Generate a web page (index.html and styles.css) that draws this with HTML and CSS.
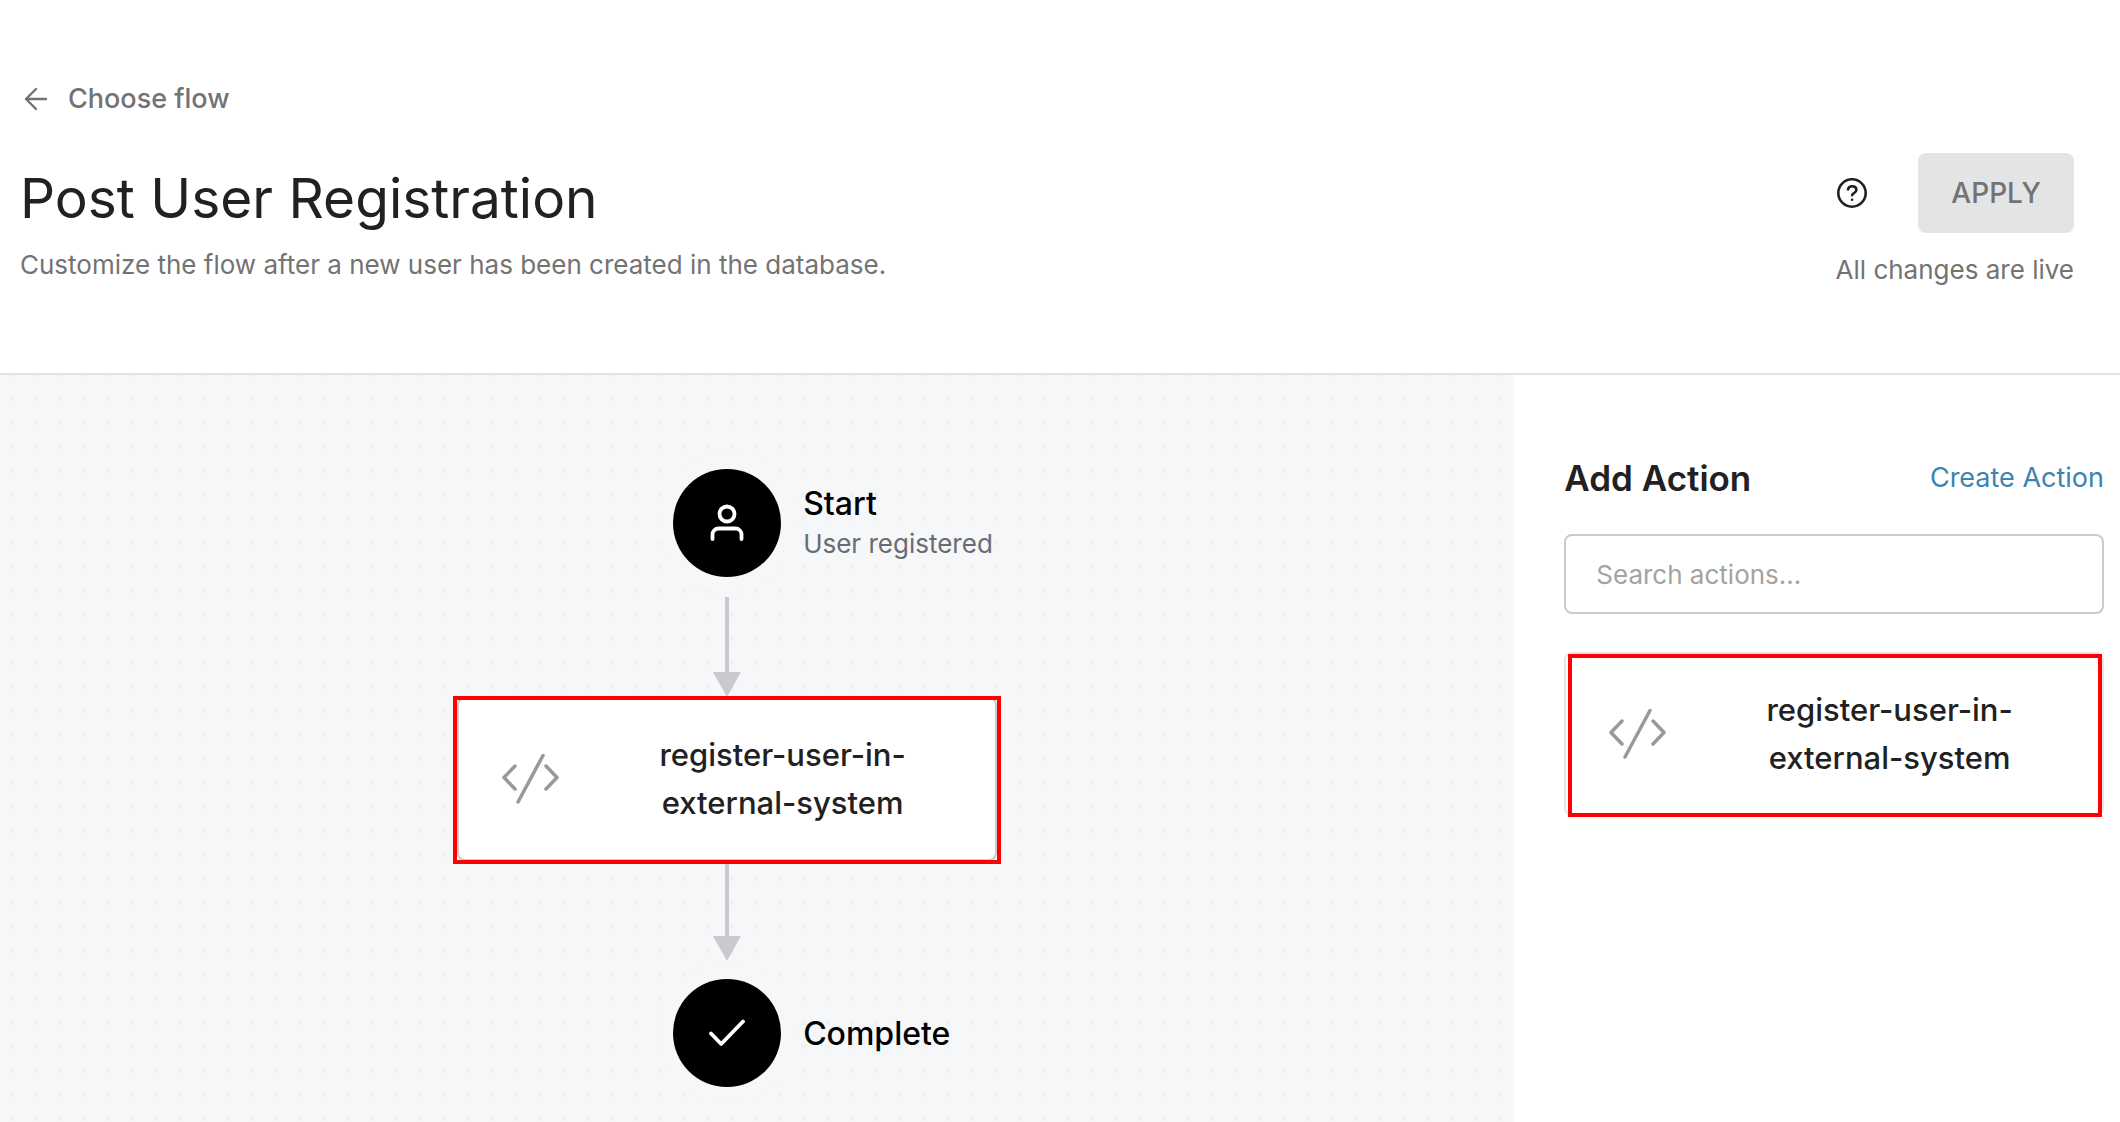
FILE: index.html
```html
<!DOCTYPE html>
<html lang="en">
<head>
<meta charset="utf-8">
<meta name="viewport" content="width=device-width, initial-scale=1">
<title>Post User Registration</title>
<link rel="stylesheet" href="styles.css">
</head>
<body>
<header class="page-header">
  <a class="back-link" href="#">
    <svg width="24" height="24" viewBox="0 0 24 24" fill="none" stroke="currentColor" stroke-width="2.4" stroke-linecap="round" stroke-linejoin="round" aria-hidden="true"><path d="M22 12H2M12 2L2 12l10 10"/></svg>
    Choose flow
  </a>
  <div class="header-row">
    <div class="intro">
      <h1 class="title">Post User Registration</h1>
      <p class="subtitle">Customize the flow after a new user has been created in the database.</p>
    </div>
    <div class="publish">
      <div class="publish-actions">
        <button class="help-button" type="button" aria-label="Help">
          <svg width="32" height="32" viewBox="0 0 32 32" fill="none" stroke="currentColor" stroke-width="2.6" stroke-linecap="round" stroke-linejoin="round" aria-hidden="true"><circle cx="16" cy="16" r="13.7"/><path d="M12 12.400c.5-2 2.100-3.100 4.100-3.100 2.500 0 4.300 1.500 4.300 3.800 0 2.900-4.300 3.100-4.300 5.200"/><path d="M16.100 22.700v.1"/></svg>
        </button>
        <button class="apply-button" type="button" disabled>APPLY</button>
      </div>
      <p class="status">All changes are live</p>
    </div>
  </div>
</header>
<main class="workspace">
  <section class="canvas" aria-label="Flow">
    <div class="node">
      <span class="node-circle">
        <svg width="36" height="40" viewBox="0 0 36 40" fill="none" stroke="currentColor" stroke-width="3.800" stroke-linecap="round" aria-hidden="true"><circle cx="18" cy="11" r="7.500"/><path d="M3.500 36v-4.500a6 6 0 0 1 6-6h17a6 6 0 0 1 6 6V36"/></svg>
      </span>
      <div class="node-label">
        <strong class="node-name">Start</strong>
        <span class="node-detail">User registered</span>
      </div>
    </div>
    <svg class="arrow arrow-start" width="28" height="100" viewBox="0 0 28 100" aria-hidden="true"><path d="M12 0h4v75h12L14 100 0 75h12z"/></svg>
    <article class="action-card placed">
      <svg class="code-icon" width="57" height="50" viewBox="0 0 57 50" aria-hidden="true"><path d="M13 12L2 23.500 13 35M44 12l11 11.500L44 35M41 1.500L16 48"/></svg>
      <span class="action-name">register-user-in-external-system</span>
    </article>
    <svg class="arrow arrow-end" width="28" height="100" viewBox="0 0 28 100" aria-hidden="true"><path d="M12 0h4v75h12L14 100 0 75h12z"/></svg>
    <div class="node">
      <span class="node-circle">
        <svg width="36" height="28" viewBox="0 0 36 28" fill="none" stroke="currentColor" stroke-width="3.800" stroke-linecap="round" stroke-linejoin="round" aria-hidden="true"><path d="M2 14.500L12.200 25 34 2.500"/></svg>
      </span>
      <div class="node-label">
        <strong class="node-name">Complete</strong>
      </div>
    </div>
  </section>
  <aside class="panel">
    <div class="panel-head">
      <h2 class="panel-title">Add Action</h2>
      <a class="create-link" href="#">Create Action</a>
    </div>
    <input class="search" type="search" placeholder="Search actions..." aria-label="Search actions">
    <article class="action-card available">
      <svg class="code-icon" width="57" height="50" viewBox="0 0 57 50" aria-hidden="true"><path d="M13 12L2 23.500 13 35M44 12l11 11.500L44 35M41 1.500L16 48"/></svg>
      <span class="action-name">register-user-in-external-system</span>
    </article>
  </aside>
</main>
</body>
</html>
```
FILE: styles.css
```css
* {
  box-sizing: border-box;
}

body {
  margin: 0;
  min-height: 100vh;
  display: flex;
  flex-direction: column;
  background: #fff;
  color: #212121;
  font-family: Inter, "Liberation Sans", sans-serif;
  font-size: 26px;
  line-height: 40px;
}

h1, h2, p {
  margin: 0;
}

/* Header */
.page-header {
  padding: 81px 46px 83px 20px;
  border-bottom: 2px solid #e2e3e4;
}

.back-link {
  display: flex;
  align-items: center;
  gap: 20px;
  width: fit-content;
  margin-left: 4px;
  color: #737373;
  font-size: 27px;
  font-weight: 500;
  line-height: 36px;
  text-decoration: none;
}

.header-row {
  display: flex;
  justify-content: space-between;
  margin-top: 36px;
}

.intro {
  padding-top: 13px;
}

.title {
  font-size: 55px;
  font-weight: 400;
  line-height: 64px;
}

.subtitle {
  margin-top: 15px;
  color: #737373;
}

.publish {
  display: flex;
  flex-direction: column;
  align-items: flex-end;
  gap: 17px;
}

.publish-actions {
  display: flex;
  align-items: center;
  gap: 50px;
}

.help-button {
  display: flex;
  padding: 0;
  border: 0;
  background: none;
  color: #212121;
}

.apply-button {
  height: 80px;
  padding: 0 33px;
  border: 0;
  border-radius: 8px;
  background: #e2e4e6;
  color: #737373;
  font: 500 28px/40px Inter, "Liberation Sans", sans-serif;
}

.status {
  color: #737373;
}

/* Workspace */
.workspace {
  flex: 1;
  display: grid;
  grid-template-columns: minmax(0, 5fr) minmax(0, 2fr);
}

.canvas {
  display: flex;
  flex-direction: column;
  align-items: center;
  padding: 94px 60px 35px 0;
  background: #f5f7f9 conic-gradient(from 270deg at 5px 5px, #f1f2f2 90deg, transparent 0) 9px 21px / 24px 24px;
}

.node {
  display: grid;
  grid-template-columns: 1fr 108px 1fr;
  column-gap: 22px;
  align-items: center;
  align-self: stretch;
}

.node-circle {
  grid-column: 2;
  display: grid;
  place-items: center;
  height: 108px;
  border-radius: 50%;
  background: #000;
  box-shadow: 0 0 0 16px #f5f7f9;
  color: #fff;
}

.node-label {
  display: flex;
  flex-direction: column;
  padding-top: 2px;
}

.node-name {
  color: #000;
  font-size: 32px;
  font-weight: 500;
}

.node-detail {
  color: #6a6b73;
}

.arrow {
  fill: #c9cace;
}

.arrow-start {
  margin-top: 20px;
}

.arrow-end {
  margin-bottom: 18px;
}

/* Action cards */
.action-card {
  position: relative;
  display: flex;
  align-items: center;
  gap: 48px;
  width: 540px;
  max-width: 100%;
  height: 164px;
  padding: 0 37px 0 43px;
  border: 2px solid #c9cace;
  border-radius: 8px;
  background: #fff;
}

.action-card::after {
  content: "";
  position: absolute;
  border: 4px solid #f00;
}

.placed::after {
  inset: -3px -6px -5px;
}

.available {
  border-color: #e5e5e7;
}

.available::after {
  inset: 0 0 -3px 2px;
}

.code-icon {
  flex: none;
  fill: none;
  stroke: #999;
  stroke-width: 3.5;
  stroke-linecap: round;
  stroke-linejoin: round;
}

.action-name {
  flex: 1;
  font-size: 31px;
  font-weight: 500;
  line-height: 48px;
  text-align: center;
}

/* Side panel */
.panel {
  padding: 79px 16px 0 50px;
}

.panel-head {
  display: flex;
  justify-content: space-between;
  align-items: center;
  line-height: 48px;
}

.panel-title {
  font-size: 35px;
  font-weight: 600;
}

.create-link {
  color: #3c83b0;
  font-size: 27px;
  text-decoration: none;
}

.search {
  display: block;
  width: 100%;
  height: 80px;
  margin: 32px 0 38px;
  padding: 0 30px;
  border: 2px solid #c9cace;
  border-radius: 8px;
  background: #fff;
  font: 400 26px/40px Inter, "Liberation Sans", sans-serif;
}

.search::placeholder {
  color: #a3a3a3;
}
```
